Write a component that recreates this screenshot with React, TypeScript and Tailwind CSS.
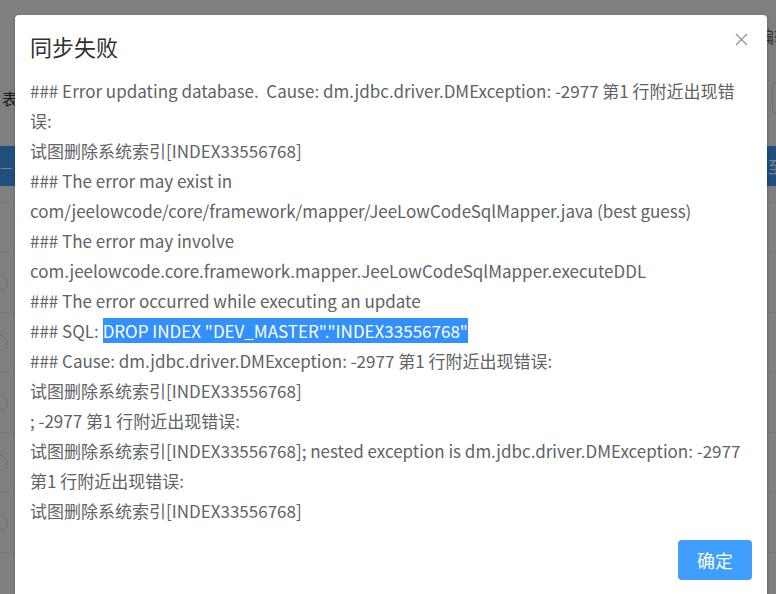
import React from "react";

const lines: React.ReactNode[] = [
  "### Error updating database.  Cause: dm.jdbc.driver.DMException: -2977 第1 行附近出现错",
  "误:",
  "试图删除系统索引[INDEX33556768]",
  "### The error may exist in",
  "com/jeelowcode/core/framework/mapper/JeeLowCodeSqlMapper.java (best guess)",
  "### The error may involve",
  "com.jeelowcode.core.framework.mapper.JeeLowCodeSqlMapper.executeDDL",
  "### The error occurred while executing an update",
  <>
    {"### SQL: "}
    <span className="bg-[#3390ff] text-white">DROP INDEX "DEV_MASTER"."INDEX33556768"</span>
  </>,
  "### Cause: dm.jdbc.driver.DMException: -2977 第1 行附近出现错误:",
  "试图删除系统索引[INDEX33556768]",
  "; -2977 第1 行附近出现错误:",
  "试图删除系统索引[INDEX33556768]; nested exception is dm.jdbc.driver.DMException: -2977",
  "第1 行附近出现错误:",
  "试图删除系统索引[INDEX33556768]",
];

function Row({ circle }: { circle: boolean }) {
  return (
    <div className="relative h-[60px] border-b border-[#ebeef5]">
      {circle && (
        <div className="absolute left-[-8px] top-[22px] h-[16px] w-[16px] rounded-full border border-[#dcdfe6]" />
      )}
    </div>
  );
}

export default function App() {
  const font = { fontFamily: '"Noto Sans CJK SC", "Noto Sans", sans-serif' };
  return (
    <div className="relative h-[594px] w-[776px] overflow-hidden bg-white" style={font}>
      {/* underlying page */}
      <div className="flex h-[72px] items-start justify-end pt-[24px]">
        <span className="mr-[-14px] text-[16px] text-[#606266]">编辑</span>
      </div>
      <div className="flex h-[74px] items-start justify-between pt-[10px]">
        <span className="ml-[2px] mt-[4px] text-[16px] text-[#303133]">表名</span>
        <div className="mr-[-40px] h-[32px] w-[44px] rounded border border-[#dcdfe6]" />
      </div>
      <div className="flex h-[40px] items-center justify-between bg-[#409eff] text-white">
        <span className="text-[14px]">—</span>
        <span className="mr-[-8px] text-[16px]">至</span>
      </div>
      <div className="h-[17px] border-b border-[#ebeef5]" />
      <div className="h-[50px] border-b border-[#ebeef5]" />
      <Row circle />
      <Row circle />
      <Row circle />
      <Row circle />
      <Row circle />
      <Row circle={false} />

      {/* overlay */}
      <div className="absolute inset-0 bg-black/50" />

      {/* dialog */}
      <div className="absolute left-[15px] top-[15px] h-[600px] w-[752px] rounded-[4px] bg-white shadow-[0_1px_3px_rgba(0,0,0,0.3)]">
        <div className="relative px-[15px] pt-[19px]">
          <div className="text-[22px] leading-[24px] text-[#303133]">同步失败</div>
          <button className="absolute right-[19px] top-[17px] flex h-[14px] w-[14px] items-center justify-center text-[#909399]">
            <svg width="13" height="13" viewBox="0 0 13 13" fill="none" stroke="currentColor" strokeWidth="1.2">
              <path d="M1 1L12 12M12 1L1 12" />
            </svg>
          </button>
        </div>
        <div className="px-[15px] pt-[18px] text-[17px] leading-[30px] text-[#606266]">
          {lines.map((l, i) => (
            <div key={i} className="whitespace-pre">
              {l}
            </div>
          ))}
        </div>
        <div className="flex justify-end px-[15px] pt-[14px]">
          <button className="h-[40px] w-[74px] rounded-[4px] bg-[#409eff] text-[18px] text-white">确定</button>
        </div>
      </div>
    </div>
  );
}
